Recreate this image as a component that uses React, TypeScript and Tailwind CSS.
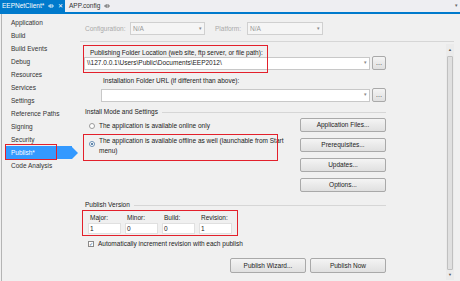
import React from 'react';

const NAV = [
  'Application',
  'Build',
  'Build Events',
  'Debug',
  'Resources',
  'Services',
  'Settings',
  'Reference Paths',
  'Signing',
  'Security',
  'Publish*',
  'Code Analysis',
];

const font = { fontFamily: '"Liberation Sans", Arial, sans-serif' };

function Pin({ color }: { color: string }) {
  return (
    <svg width="6" height="6" viewBox="0 0 6 6">
      <path d="M0 3h2M2 1.5v3M2 2h3v2H2" stroke={color} strokeWidth="0.8" fill="none" />
    </svg>
  );
}

function Button({ label, className = '' }: { label: string; className?: string }) {
  return (
    <div
      className={`h-[14px] border border-[#a9a9a9] rounded-[2px] bg-gradient-to-b from-[#f4f4f4] to-[#e0e0e0] flex items-center justify-center text-[6.5px] text-[#222] ${className}`}
    >
      {label}
    </div>
  );
}

function Combo({ text, w, disabled }: { text: string; w: string; disabled?: boolean }) {
  return (
    <div
      className={`${w} h-[13px] border flex items-center px-[2px] text-[6.5px] ${
        disabled ? 'border-[#d0d0d0] bg-[#f5f5f5] text-[#999]' : 'border-[#c8c8c8] bg-white text-[#222]'
      }`}
    >
      <span className="flex-1">{text}</span>
      <span className="text-[5px] text-[#888]">▾</span>
    </div>
  );
}

export default function App() {
  return (
    <div className="w-[460px] h-[281px] bg-[#f0f0f0] relative overflow-hidden text-[#222]" style={font}>
      {/* Tabs */}
      <div className="h-[12px] flex items-stretch bg-[#eeeef2] text-[6.5px]">
        <div className="w-[65px] bg-[#007acc] text-white flex items-center pl-[2px] gap-[4px]">
          <span>EEPNetClient*</span>
          <Pin color="#ffffff" />
          <span className="text-[6px]">✕</span>
        </div>
        <div className="flex items-center pl-[4px] gap-[4px] text-[#333]">
          <span>APP.config</span>
          <Pin color="#555" />
        </div>
        <div className="flex-1" />
        <div className="flex items-center pr-[2px] text-[5px] text-[#666]">▾</div>
      </div>
      <div className="h-[2px] bg-[#007acc]" />

      <div className="flex h-[267px]">
        <div className="w-[1px] bg-[#b4b4b4] ml-[1px]" />
        {/* Nav */}
        <div className="w-[78px] pt-[2px] text-[6.5px]">
          {NAV.map((n) =>
            n === 'Publish*' ? (
              <div key={n} className="relative h-[13px] flex items-center">
                <div className="ml-[4px] w-[66px] h-[13px] bg-[#3399ff] text-white flex items-center pl-[5px]">{n}</div>
                <div className="w-0 h-0 border-y-[6.5px] border-y-transparent border-l-[6px] border-l-[#3399ff]" />
              </div>
            ) : (
              <div key={n} className="h-[13px] flex items-center pl-[9px] text-[#333]">
                {n}
              </div>
            )
          )}
        </div>

        {/* Content */}
        <div className="flex-1 flex flex-col">
          <div className="h-[27px] flex items-center pl-[5px] pt-[2px] text-[6.5px] text-[#aaa]">
            <span className="w-[45px]">Configuration:</span>
            <Combo text="N/A" w="w-[75px]" disabled />
            <span className="ml-[10px] w-[32px]">Platform:</span>
            <Combo text="N/A" w="w-[76px]" disabled />
          </div>
          <div className="h-[1px] bg-[#d6d6d6] mr-[6px]" />

          <div className="flex flex-1">
            <div className="w-[306px] text-[6.5px] pl-[4px]">
              <div className="pt-[6px] pl-[6px] h-[13px]">Publishing Folder Location (web site, ftp server, or file path):</div>
              <div className="flex items-center gap-[2px] mt-[1px]">
                <Combo text="\\127.0.0.1\Users\Public\Documents\EEP2012\" w="w-[286px]" />
                <Button label="…" className="w-[14px]" />
              </div>
              <div className="pl-[19px] pt-[7px] h-[18px] flex items-end pb-[2px]">Installation Folder URL (if different than above):</div>
              <div className="flex items-center gap-[2px] pl-[17px]">
                <Combo text="" w="w-[269px]" />
                <Button label="…" className="w-[14px]" />
              </div>

              <div className="flex items-center mt-[5px] h-[10px]">
                <span className="pl-[1px]">Install Mode and Settings</span>
                <div className="flex-1 h-[1px] bg-[#d6d6d6] ml-[4px]" />
              </div>

              <div className="flex mt-[1px]">
                <div className="flex-1">
                  <div className="flex items-center h-[14px] pl-[5px] mt-[1px]">
                    <span className="w-[6px] h-[6px] rounded-full border border-[#9a9a9a] bg-white mr-[4px]" />
                    The application is available online only
                  </div>
                  <div className="flex pl-[5px] mt-[3px]">
                    <span className="w-[6px] h-[6px] rounded-full border border-[#6b8fb5] bg-white mr-[4px] mt-[5px] flex items-center justify-center">
                      <span className="w-[2.5px] h-[2.5px] rounded-full bg-[#2c5f8f]" />
                    </span>
                    <span className="leading-[10px]">
                      The application is available offline as well (launchable from Start
                      <br />
                      menu)
                    </span>
                  </div>
                </div>
                <div className="w-[86px] flex flex-col gap-[6px]">
                  <Button label="Application Files..." />
                  <Button label="Prerequisites..." />
                  <Button label="Updates..." />
                  <Button label="Options..." />
                </div>
              </div>

              <div className="flex items-center mt-[8px] h-[10px]">
                <span className="pl-[1px]">Publish Version</span>
                <div className="flex-1 h-[1px] bg-[#d6d6d6] ml-[4px]" />
              </div>
              <div className="flex gap-[4px] pl-[4px] mt-[2px]">
                {[
                  ['Major:', '1'],
                  ['Minor:', '0'],
                  ['Build:', '0'],
                  ['Revision:', '1'],
                ].map(([l, v]) => (
                  <div key={l} className="w-[33px]">
                    <div className="h-[11px] pl-[2px] flex items-center">{l}</div>
                    <div className="h-[11px] bg-white border border-[#e0e0e0] flex items-center pl-[1px]">{v}</div>
                  </div>
                ))}
              </div>
              <div className="flex items-center mt-[5px] pl-[4px] h-[10px]">
                <span className="w-[6px] h-[6px] border border-[#8a8a8a] bg-white mr-[4px] flex items-center justify-center text-[5px] leading-none text-[#2c5f8f]">
                  ✓
                </span>
                Automatically increment revision with each publish
              </div>
              <div className="flex justify-end gap-[4px] mt-[9px]">
                <Button label="Publish Wizard..." className="w-[76px] h-[15px]" />
                <Button label="Publish Now" className="w-[76px] h-[15px]" />
              </div>
            </div>

            <div className="flex-1" />
            {/* Scrollbar */}
            <div className="w-[8px] mr-[6px] mt-[2px] mb-[1px] flex flex-col items-center bg-[#ebebeb]">
              <span className="text-[4px] text-[#555] h-[12px] flex items-center">▲</span>
              <div className="flex-1 w-[6px] bg-[#e0e0e0] border border-[#c0c0c0] rounded-[1px]" />
              <span className="text-[4px] text-[#555] h-[10px] flex items-center">▼</span>
            </div>
          </div>
        </div>
      </div>

      {/* Annotation boxes */}
      <div className="absolute left-[5px] top-[144px] w-[52px] h-[16px] border-[1.5px] border-[#e3202b]" />
      <div className="absolute left-[83px] top-[45px] w-[185px] h-[28px] border-[1.5px] border-[#e3202b]" />
      <div className="absolute left-[83px] top-[134px] w-[195px] h-[27px] border-[1.5px] border-[#e3202b]" />
      <div className="absolute left-[82px] top-[210px] w-[156px] h-[26px] border-[1.5px] border-[#e3202b]" />
    </div>
  );
}
